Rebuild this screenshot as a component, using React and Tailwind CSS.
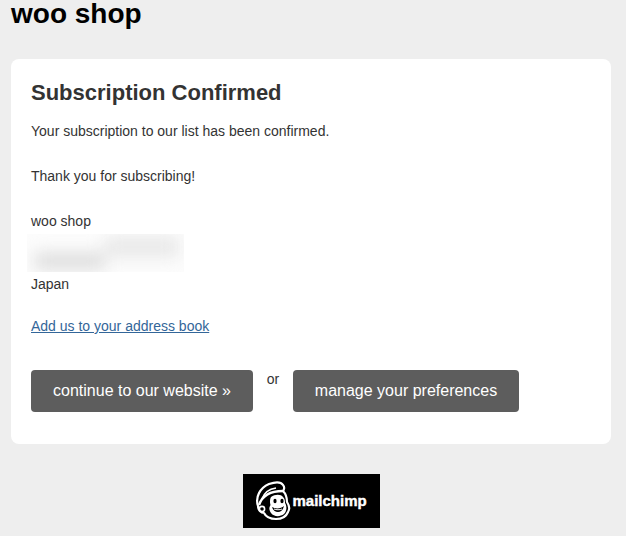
import React from 'react';

function MonkeyMark() {
  return (
    <svg width="36" height="40" viewBox="0 0 36 40" fill="none" className="shrink-0">
      <path d="M3 25C0 16 5 7 14 3c6-2 12-2 14 1 2 2 1 5 0 6 3 3 4 7 4 11 2 3 3 7 1 10-2 5-7 7-12 7-6 0-10-2-12-6-3 0-6-3-6-7z" fill="#000" stroke="#fff" strokeWidth="2.2" strokeLinejoin="round" />
      <path d="M4 24c3-9 11-14 24-14" stroke="#fff" strokeWidth="2.4" />
      <path d="M7 18C9 12 14 8 21 7" stroke="#fff" strokeWidth="1.6" />
      <path d="M16 16c4-3 10-3 12 0 2 2 2 4 2 6 2 3 2 8-1 11-4 3-10 3-13-1-2-3-2-5-1-7 1-1 0-2 0-4 0-2 0-3 1-5z" fill="#fff" />
      <ellipse cx="20" cy="20" rx="1.6" ry="2.2" fill="#000" />
      <ellipse cx="27" cy="20" rx="1.6" ry="2.2" fill="#000" />
      <path d="M17 26c3 2 9 2 12-1-1 4-3 6-6 6-3 0-5-2-6-5z" fill="#000" />
      <path d="M19 28c2 1 6 1 8 0" stroke="#fff" strokeWidth="1" />
      <circle cx="7" cy="28" r="2.6" stroke="#fff" strokeWidth="1.6" />
    </svg>
  );
}

export default function App() {
  return (
    <div className="h-[536px] overflow-hidden bg-[#eeeeee] pl-[11px] pr-[15px] font-['Liberation_Sans',Arial,sans-serif] text-[#333333]">
      <h1 className="h-[59px] text-[28px] font-bold leading-[28px] text-black">woo shop</h1>

      <div className="h-[385px] rounded-[8px] bg-white px-5 pt-[20px]">
        <h2 className="text-[22px] font-bold leading-[28px]">Subscription Confirmed</h2>
        <p className="mt-[14px] text-[14px] leading-[21px]">Your subscription to our list has been confirmed.</p>
        <p className="mt-[24px] text-[14px] leading-[21px]">Thank you for subscribing!</p>
        <p className="mt-[24px] text-[14px] leading-[21px]">woo shop</p>

        <div className="-ml-1 mt-[2px] h-[38px] w-[157px] overflow-hidden bg-[#fcfcfc]">
          <div className="flex h-full items-end pb-[3px] pl-2 pr-1 blur-[8px]">
            <div className="h-4 w-[70px] bg-[#dcdcdc]" />
            <div className="mb-3 h-5 w-[74px] bg-[#e8e8e8]" />
          </div>
        </div>

        <p className="mt-[2px] text-[14px] leading-[21px]">Japan</p>
        <p className="mt-[21px] text-[14px] leading-[21px]">
          <a href="#" className="text-[#336699] underline">Add us to your address book</a>
        </p>

        <div className="mt-[33px] flex items-start">
          <a href="#" className="flex h-[42px] w-[222px] items-center justify-center rounded-[4px] bg-[#5d5d5d] text-[16px] text-white">
            continue to our website »
          </a>
          <span className="w-[40px] text-center text-[14px] leading-[18px]">or</span>
          <a href="#" className="flex h-[42px] w-[226px] items-center justify-center rounded-[4px] bg-[#5d5d5d] text-[16px] text-white">
            manage your preferences
          </a>
        </div>
      </div>

      <div className="mt-[30px] flex justify-center">
        <div className="flex h-[54px] w-[137px] items-center bg-black pl-[12px]">
          <MonkeyMark />
          <span className="ml-[2px] text-[15px] font-bold text-white [-webkit-text-stroke:0.4px_white]">mailchimp</span>
        </div>
      </div>
    </div>
  );
}
